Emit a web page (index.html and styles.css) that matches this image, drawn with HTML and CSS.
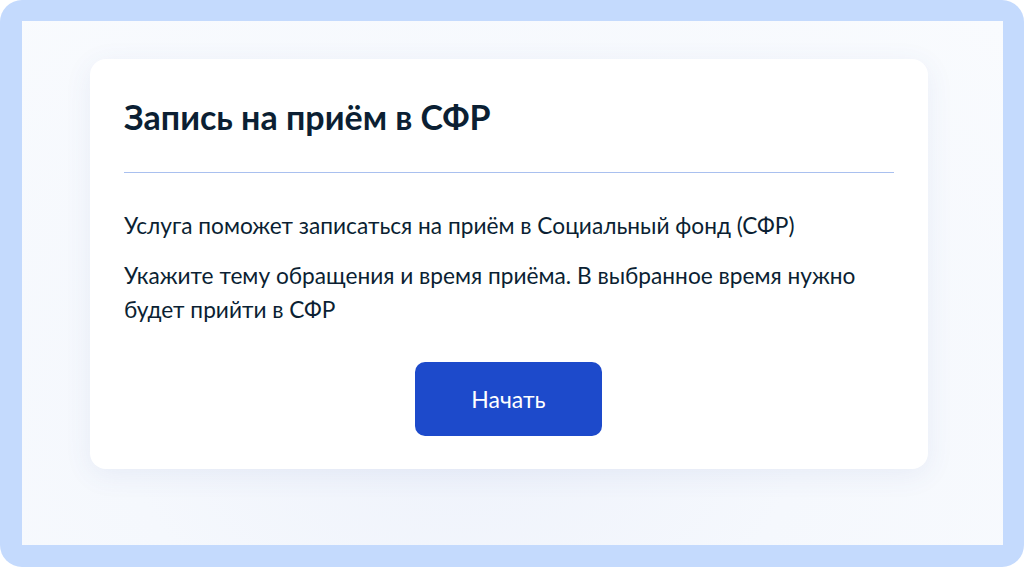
FILE: index.html
```html
<!DOCTYPE html>
<html lang="ru">
<head>
<meta charset="utf-8">
<title>Запись на приём в СФР</title>
<link rel="stylesheet" href="styles.css">
</head>
<body>
<div class="frame">
  <div class="screen">
    <section class="card">
      <h1 class="title">Запись на приём в СФР</h1>
      <hr class="divider">
      <p class="text">Услуга поможет записаться на приём в Социальный фонд (СФР)</p>
      <p class="text">Укажите тему обращения и время приёма. В выбранное время нужно будет прийти в СФР</p>
      <div class="actions">
        <button class="btn" type="button">Начать</button>
      </div>
    </section>
  </div>
</div>
</body>
</html>
```

FILE: styles.css
```css
* { box-sizing: border-box; }
html, body { margin: 0; padding: 0; background: #ffffff; }
body { font-family: Lato, "Noto Sans", sans-serif; color: #0b1f33; }

.frame {
  width: 1024px;
  height: 567px;
  background: #c4dafd;
  border-radius: 22px;
  padding: 21px 21px 22px 22px;
}

.screen {
  width: 100%;
  height: 100%;
  background: radial-gradient(ellipse at 45% 75%, #eef2fb 0%, #f5f8fd 45%, #f9fbfe 100%);
  padding: 38px 0 0 68px;
}

.card {
  width: 838px;
  height: 410px;
  background: #ffffff;
  border-radius: 16px;
  box-shadow: 0 6px 28px rgba(60, 90, 160, 0.08);
  padding: 38px 34px 34px;
}

.title {
  margin: 0;
  font-size: 34px;
  line-height: 40px;
  font-weight: 700;
  color: #0b1f33;
}

.divider {
  margin: 35px 0 0;
  border: 0;
  height: 1px;
  background: #a9c0ef;
}

.text {
  margin: 0;
  font-size: 22.7px;
  line-height: 34px;
  color: #0b1f33;
}
.divider + .text { margin-top: 36px; }
.text + .text { margin-top: 16px; }

.actions {
  display: flex;
  justify-content: center;
  margin-top: 35px;
}

.btn {
  width: 187px;
  height: 74px;
  border: 0;
  border-radius: 10px;
  background: #1d4acb;
  color: #ffffff;
  font-family: Lato, "Noto Sans", sans-serif;
  font-size: 23px;
  font-weight: 400;
  margin-left: -1px;
}
```
